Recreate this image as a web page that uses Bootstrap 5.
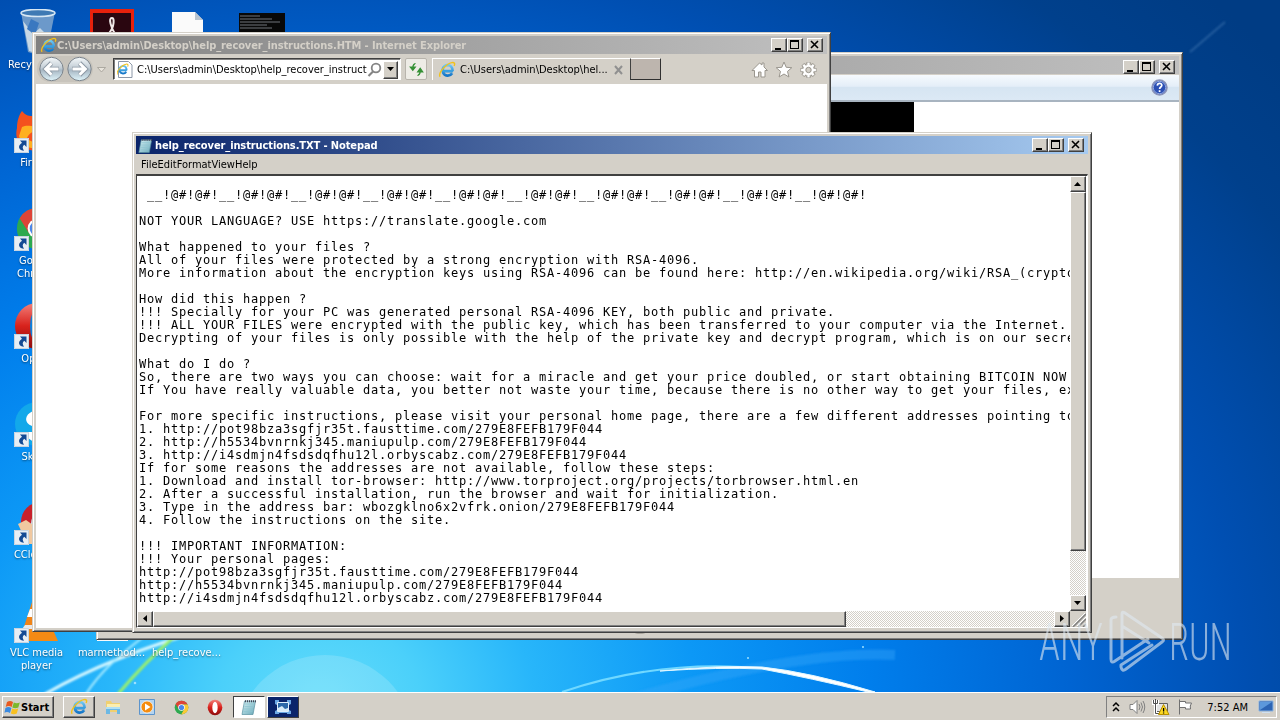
<!DOCTYPE html>
<html lang="en">
<head>
    <meta charset="UTF-8">
    <meta name="viewport" content="width=device-width, initial-scale=1.0">
    <title>Desktop</title>
    <link href="https://cdn.jsdelivr.net/npm/bootstrap@5.3.0/dist/css/bootstrap.min.css" rel="stylesheet">
    <style>
        :root { --face: #d4d0c8; --dark: #404040; --shade: #808080; }
        body { width: 1280px; height: 720px; overflow: hidden; font: 11px/13px "DejaVu Sans Condensed", "DejaVu Sans", sans-serif; font-stretch: condensed; color: #000; background: #0050b0; }
        svg { display: block; flex: none; }
        .desk { height: 692px; }
        .wallpaper { position: absolute; left: 0; top: 0; }

        /* desktop icons */
        .icon-grid { position: absolute; left: -1px; top: 5px; display: grid; grid-template-columns: repeat(4, 75px); grid-template-rows: repeat(7, 98px); }
        .icon-cell { padding-top: 4px; text-align: center; color: #fff; text-shadow: 0 1px 2px #0008; white-space: nowrap; }
        .icon-cell svg { margin: 0 auto 1px; }

        /* windows */
        .win { position: absolute; background: var(--face); border: 1px solid; border-color: var(--face) var(--dark) var(--dark) var(--face); box-shadow: inset 1px 1px #fff, inset -1px -1px var(--shade); padding: 3px; display: flex; flex-direction: column; }
        .win-photo { left: 96px; top: 52px; width: 1087px; height: 588px; }
        .win-ie { left: 32px; top: 32px; width: 799px; height: 600px; }
        .win-note { left: 132px; top: 132px; width: 960px; height: 501px; }
        .caption { height: 18px; flex: none; font-weight: bold; color: #d4d0c8; background: linear-gradient(90deg, #808080, #c0c0c0); white-space: nowrap; }
        .win-note .caption { color: #fff; background: linear-gradient(90deg, #0a246a, #a6caf0); }
        .cap-btn { width: 16px; height: 14px; flex: none; }
        .raised { background: var(--face); border: 1px solid; border-color: #fff var(--dark) var(--dark) #fff; box-shadow: inset -1px -1px var(--shade); flex: none; display: flex; align-items: center; justify-content: center; }
        .checker { background: repeating-conic-gradient(#fff 0 25%, #d4d0c8 0 50%) 0 0 / 2px 2px; }

        /* photo viewer */
        .cmd-bar { height: 27px; margin-top: 1px; background: linear-gradient(#f6fafe 0, #e4eef8 45%, #d6e5f2 50%, #dce9f5 100%); border-bottom: 2px solid #a8b4c0; padding-right: 11px; }
        .photo-view { height: 476px; background: #fff; }
        .photo-black { width: 814px; background: #000; }

        /* browser */
        .ie-bar { height: 30px; flex: none; }
        .addr { width: 288px; height: 22px; margin-left: 5px; background: #fff; border: 1px solid; border-color: #404040 #fff #fff #404040; box-shadow: inset 1px 1px #808080; padding: 1px 2px 0 3px; }
        .refresh { width: 22px; height: 22px; margin-left: 4px; background: #eeece6; border: 1px solid #b8b4ac; border-radius: 2px; }
        .ie-tab { width: 198px; height: 22px; margin-left: 5px; border-left: 1px solid #fff; border-top: 1px solid #fff; padding: 0 4px 0 5px; }
        .new-tab { width: 31px; height: 22px; background: #bdb5ae; border: 1px solid; border-color: #fff #303030 #303030 #404040; }

        /* notepad */
        .menu-row { height: 20px; padding-left: 5px; }
        .edit-box { border-left: 1px solid var(--dark); border-top: 2px solid var(--dark); border-right: 1px solid #fff; border-bottom: 1px solid #fff; background: #fff; display: grid; grid-template-columns: 933px 16px; grid-template-rows: 435px 16px; }
        .note-text { margin: 0; padding: 0 0 0 2px; overflow: hidden; font: 12px/13px "DejaVu Sans Mono", monospace; letter-spacing: .776px; color: #000; white-space: pre; }
        .sb-btn { width: 16px; height: 16px; }

        /* taskbar */
        .task-bar { height: 28px; background: var(--face); box-shadow: inset 0 1px #fff; padding: 4px 3px 2px 2px; position: relative; }
        .start-btn { width: 52px; height: 22px; font-weight: bold; justify-content: start; padding-left: 1px; }
        .task-item { width: 32px; height: 22px; flex: none; display: flex; align-items: center; justify-content: center; }
        .task-item.on { background: #fff; border: 1px solid; border-color: #404040 #fff #fff #404040; }
        .task-item.hot { background: #0a246a; border: 1px solid; border-color: #fff #404040 #404040 #fff; }
        .tray { width: 171px; height: 22px; border: 1px solid; border-color: #808080 #fff #fff #808080; padding: 0 1px 0 5px; }
        .watermark { position: absolute; left: 1030px; top: 600px; }
        .f-title { letter-spacing: -.1px; }
    </style>
</head>
<body>

<!-- Shared symbols -->
<svg width="0" height="0" class="position-absolute">
    <defs>
        <linearGradient id="ieBlue" x1="0" y1="0" x2="0" y2="1"><stop offset="0" stop-color="#6cc8f6"/><stop offset="1" stop-color="#1677c8"/></linearGradient>
        <linearGradient id="redFade" x1="0" y1="0" x2="0" y2="1"><stop offset="0" stop-color="#f2807a"/><stop offset=".5" stop-color="#d8221c"/><stop offset="1" stop-color="#8c0c0c"/></linearGradient>
        <linearGradient id="navBall" x1="0" y1="0" x2="0" y2="1"><stop offset="0" stop-color="#f4f8fa"/><stop offset=".45" stop-color="#c4ced6"/><stop offset=".55" stop-color="#a8b8c4"/><stop offset="1" stop-color="#dff4fa"/></linearGradient>
        <linearGradient id="padFade" x1="0" y1="0" x2="1" y2="1"><stop offset="0" stop-color="#d8f2f6"/><stop offset="1" stop-color="#68a8b8"/></linearGradient>
        <symbol id="ie" viewBox="0 0 18 18">
            <path d="M4.6 10.2h10.2M14.7 10.2C14.6 6.3 12.4 4 9.6 4a5.3 5.3 0 1 0 4.6 8.3" fill="none" stroke="url(#ieBlue)" stroke-width="2.7"/>
            <path d="M4.6 10h10" stroke="#3aa0e0" stroke-width="2"/>
            <path d="M2.2 15.8C.2 13.2 4 7.400 9.500 3.500c3-2 6.200-2.600 7-1.200.3.7.1 1.700-.4 2.700" fill="none" stroke="#f2c21a" stroke-width="1.400"/>
        </symbol>
        <symbol id="pad" viewBox="0 0 18 18">
            <path d="M4.500 3h11L13 16.500H2z" fill="url(#padFade)" stroke="#5890a0" stroke-width=".7"/>
            <path d="M5 6h9M4.500 8.500h9M4 11h9M3.600 13.500h8.500" stroke="#8cc4d0" stroke-width=".7"/>
            <path d="M5 3.200h11" stroke="#445" stroke-width="2" stroke-dasharray="1 1"/>
        </symbol>
        <symbol id="chrome" viewBox="0 0 48 48">
            <circle cx="24" cy="24" r="22" fill="#2da94f"/>
            <path d="M5 13A22 22 0 0 1 43.500 14H24L15 29z" fill="#de4437"/>
            <path d="M43.500 14A22 22 0 0 1 23 46l10-17-4-15z" fill="#fcc934"/>
            <circle cx="24" cy="24" r="10.500" fill="#fff"/><circle cx="24" cy="24" r="8.300" fill="#4a86e8"/>
        </symbol>
        <symbol id="opera" viewBox="0 0 48 48">
            <ellipse cx="24" cy="24" rx="22" ry="23" fill="url(#redFade)"/>
            <ellipse cx="24" cy="24" rx="8" ry="17" fill="#fff"/>
        </symbol>
        <symbol id="arrow" viewBox="0 0 15 15">
            <path d="M0 0h15v15H0z" fill="#e8eef4"/><path d="M.5.5h14v14H.5z" fill="none" stroke="#c8d4e0"/>
            <path d="M6 2.500h6.500V9l-2.200-2.200C8 8.500 8.500 10.500 10 12.800 5.500 12.500 2.500 8.500 8 4.700z" fill="#144a94"/>
        </symbol>
        <symbol id="cMin" viewBox="0 0 14 12"><path d="M3 9h6v2H3z"/></symbol>
        <symbol id="cMax" viewBox="0 0 14 12"><path d="M2 1h9v9H2zM3 3v6h7V3z" fill-rule="evenodd"/></symbol>
        <symbol id="cX" viewBox="0 0 14 12"><path d="M3 2l7 7M10 2L3 9" stroke="#000" stroke-width="1.600"/></symbol>
    </defs>
</svg>

<div class="desk">
    <!-- Wallpaper -->
    <svg class="wallpaper" width="1280" height="692">
        <defs>
            <radialGradient id="sky" gradientUnits="userSpaceOnUse" cx="0" cy="0" r="1250" gradientTransform="translate(320 700) scale(1 .8)">
                <stop offset="0" stop-color="#62dcfb"/><stop offset=".08" stop-color="#4bd0fa"/><stop offset=".17" stop-color="#28b6fa"/><stop offset=".3" stop-color="#0c98f6"/><stop offset=".44" stop-color="#007eec"/><stop offset=".6" stop-color="#0064d2"/><stop offset=".74" stop-color="#004fb2"/><stop offset=".9" stop-color="#00408c"/><stop offset="1" stop-color="#003c84"/>
            </radialGradient>
            <filter id="soft"><feGaussianBlur stdDeviation="1.200"/></filter>
        </defs>
        <rect width="1280" height="692" fill="url(#sky)"/>
        <circle cx="325" cy="745" r="90" fill="#fff" opacity=".16"/>
        <g fill="none" filter="url(#soft)">
            <path d="M45 694C90 668 140 648 210 628" stroke="#d8f8ff" stroke-width="3"/>
            <path d="M86 694C100 672 120 654 150 632" stroke="#a8ecff" stroke-width="2"/>
            <path d="M118 694C135 674 152 656 175 636" stroke="#9cf06c" stroke-width="3"/>
            <path d="M600 708Q790 650 895 655" stroke="#38a8fa" stroke-width="10" opacity=".4"/>
            <path d="M1190 52L1225 22" stroke="#4a80b8" stroke-width="2" opacity=".5"/>
        </g>
        <path d="M562 692Q650 662 742 667" fill="none" stroke="#70d8ff" stroke-width="2"/>
        <path d="M660 671Q720 665 762 667 810 672 875 692L868 692Q810 678 762 669 720 667 660 671z" fill="#fff" stroke="#e0f6ff"/>
        <g fill="#9ce0ff"><circle cx="748" cy="658" r="1"/><circle cx="863" cy="647" r="1"/><circle cx="135" cy="683" r="1.300"/></g>
    </svg>

    <!-- Desktop icons -->
    <div class="icon-grid">
        <div class="icon-cell">
            <svg width="48" height="48">
                <path d="M8 3l7 40q9 4 19 0l8-40z" fill="#7fa6cc" opacity=".85"/><path d="M10 12l6 30q8 3 17 0l3-14-9-9-7 6z" fill="#dfe8ee" opacity=".8"/>
                <path d="M18 10l8 4-4 12-8-6z" fill="#3a78c0"/><ellipse cx="25" cy="4" rx="17" ry="3.500" fill="#3f7ab4" stroke="#d8e8f4" stroke-width="1.500"/>
            </svg>
            Recycle Bin
        </div>
        <div class="icon-cell">
            <svg width="48" height="48"><path d="M2 0h44v46H2z" fill="#e8210c"/><path d="M5 4h38v38H5z" fill="#2a0610"/><path d="M24 9c-3 0-2 5 0 10s6 9 9 10-14 1-18 6c-2-4 8-10 10-18 1-4 1-8-1-8z" fill="none" stroke="#f0e8e8" stroke-width="2"/></svg>
            Acrobat
        </div>
        <div class="icon-cell">
            <svg width="48" height="48"><path d="M9 3h23l8 8v36H9z" fill="#fafafa"/><path d="M32 3v8h8z" fill="#b8c4d0"/></svg>
        </div>
        <div class="icon-cell">
            <svg width="48" height="48"><path d="M1 4h46v40H1z" fill="#080808"/><path d="M2 7h20M2 10h32M2 13h40M2 16h27M2 19h32" stroke="#70747a"/></svg>
        </div>

        <div class="icon-cell" style="grid-column: 1">
            <svg width="48" height="48">
                <path d="M9 4c3 4 6 5 10 5C28 2 45 6 46 25S32 46 22 44C8 42 1 33 4 21 4 14 6 8 9 4z" fill="#f4511e"/><path d="M9 20c5-3 11 0 15-1-3 6-8 7-10 12 4 5 12 6 18 2-4 12-22 11-26-4z" fill="#ffb020"/><circle cx="28" cy="24" r="9" fill="#30357c"/>
                <use href="#arrow" x="1" y="31" width="15" height="15"/>
            </svg>
            Firefox
        </div>
        <div class="icon-cell" style="grid-column: 1">
            <svg width="48" height="48"><use href="#chrome" x="2" y="1" width="45" height="45"/><use href="#arrow" x="1" y="31" width="15" height="15"/></svg>
            Google<br>Chrome
        </div>
        <div class="icon-cell" style="grid-column: 1">
            <svg width="48" height="48"><ellipse cx="24" cy="23" rx="22" ry="23" fill="url(#redFade)"/><ellipse cx="25" cy="23" rx="8" ry="18" fill="#0a80e0"/><use href="#arrow" x="1" y="31" width="15" height="15"/></svg>
            Opera
        </div>
        <div class="icon-cell" style="grid-column: 1">
            <svg width="48" height="48"><circle cx="24" cy="23" r="22" fill="#12a8ea"/><path d="M34 10H20c-9 4-9 12-1 15l14 4-2 6c-6 2-11 0-12-4h-6c1 10 12 12 20 9z" fill="#fff"/><use href="#arrow" x="1" y="31" width="15" height="15"/></svg>
            Skype
        </div>
        <div class="icon-cell" style="grid-column: 1">
            <svg width="48" height="48"><circle cx="28" cy="23" r="20" fill="#c8202a"/><circle cx="32" cy="25" r="14" fill="#c8dcec"/><path d="M5 25l8-4 14 10 4 14H14z" fill="#f0c8a0"/><use href="#arrow" x="1" y="31" width="15" height="15"/></svg>
            CCleaner
        </div>
        <div class="icon-cell" style="grid-column: 1">
            <svg width="48" height="48"><path d="M20 2h8l12 34H9z" fill="#f08418"/><path d="M17 12h14l3 8H14z" fill="#fff"/><path d="M12 28h25l1 4H9z" fill="#e8e8e8"/><path d="M10 33h30l5 11H3z" fill="#f48a14"/><use href="#arrow" x="1" y="31" width="15" height="15"/></svg>
            VLC media<br>player
        </div>
        <div class="icon-cell">
            <svg width="48" height="48"><path d="M9 2h31v42H9z" fill="#fafafa"/></svg>
            marmethod...
        </div>
        <div class="icon-cell">
            <svg width="48" height="48"><path d="M9 2h31v41H9z" fill="#fafafa"/></svg>
            help_recove...
        </div>
    </div>

    <!-- Photo viewer -->
    <div class="win win-photo">
        <div class="caption d-flex align-items-center justify-content-end pe-1 pt-1">
            <div class="raised cap-btn"><svg width="14" height="12"><use href="#cMin"/></svg></div>
            <div class="raised cap-btn"><svg width="14" height="12"><use href="#cMax"/></svg></div>
            <div class="raised cap-btn ms-1"><svg width="14" height="12"><use href="#cX"/></svg></div>
        </div>
        <div class="cmd-bar d-flex align-items-center justify-content-end">
            <svg width="17" height="17" viewBox="0 0 17 17"><circle cx="8.500" cy="8.500" r="7.500" fill="#2c50b4" stroke="#8c94b8" stroke-width="1.500"/><circle cx="8.500" cy="8.500" r="6.200" fill="none" stroke="#a8bce8" stroke-width=".8"/><path d="M6.300 6.600c.2-3 4.600-2.800 4.500-.2-.1 1.600-2.200 1.700-2.200 3.600M8.600 11.300v1.700" fill="none" stroke="#fff" stroke-width="1.700"/></svg>
        </div>
        <div class="photo-view d-flex"><div class="photo-black"></div></div>
        <div class="flex-grow-1 d-flex align-items-end justify-content-center"><svg width="14" height="4"><ellipse cx="7" cy="0" rx="6" ry="2" fill="#a8a49c"/></svg></div>
    </div>

    <!-- Internet Explorer -->
    <div class="win win-ie">
        <div class="caption d-flex align-items-center ps-1 pe-1">
            <svg width="17" height="17"><use href="#ie"/></svg>
            <span class="f-title flex-grow-1">C:\Users\admin\Desktop\help_recover_instructions.HTM - Internet Explorer</span>
            <div class="raised cap-btn"><svg width="14" height="12"><use href="#cMin"/></svg></div>
            <div class="raised cap-btn"><svg width="14" height="12"><use href="#cMax"/></svg></div>
            <div class="raised cap-btn ms-1"><svg width="14" height="12"><use href="#cX"/></svg></div>
        </div>
        <div class="ie-bar d-flex align-items-center">
            <svg width="72" height="28" viewBox="0 0 72 28">
                <rect x="1" y="1" width="56" height="26" rx="13" fill="#c8c4bc"/>
                <g fill="url(#navBall)" stroke="#7c848c"><circle cx="15.500" cy="14" r="11.700"/><circle cx="43.500" cy="14" r="11.700"/></g>
                <g fill="none" stroke="#8c98a4" stroke-width="4.600"><path d="M23 14H10M15.500 8L9.500 14l6 6M36 14h13M43.500 8l6 6-6 6"/></g>
                <g fill="none" stroke="#fff" stroke-width="3"><path d="M22.500 14H10M15.500 8.200L9.700 14l5.800 5.800M36.500 14h12.500M43.500 8.200l5.800 5.800-5.800 5.800"/></g>
                <path d="M61.500 12.500h8L65.500 17z" fill="#e8e4dc" stroke="#a09c94" stroke-width=".8"/>
            </svg>
            <div class="addr d-flex align-items-center">
                <svg width="16" height="17" viewBox="0 0 16 17"><path d="M1.500.5h10l3.500 3.500v12.500H1.500z" fill="#fff" stroke="#8c98a8"/><use href="#ie" x="-1" y="2" width="13" height="13"/></svg>
                <span class="f-addr flex-grow-1 ms-1 text-nowrap">C:\Users\admin\Desktop\help_recover_instruct</span>
                <svg width="16" height="16" viewBox="0 0 16 16"><circle cx="9" cy="6" r="4.300" fill="none" stroke="#848484" stroke-width="1.800"/><path d="M6 9.500L1.500 14" stroke="#848484" stroke-width="2.200"/></svg>
                <div class="raised" style="width: 15px; height: 18px"><svg width="8" height="5"><path d="M0 0h7L3.500 4z"/></svg></div>
            </div>
            <div class="refresh d-flex align-items-center justify-content-center">
                <svg width="15" height="15" viewBox="0 0 15 15"><path d="M6.500 1.500Q3.800 2 3.800 5.500M1.200 5h5.200L3.800 8.400zM8.500 13.500q2.700-.5 2.700-4M8.600 10h5.200l-2.600-3.700z" fill="#349034" stroke="#349034" stroke-width="1.100"/></svg>
            </div>
            <div class="ie-tab d-flex align-items-center">
                <svg width="18" height="18"><use href="#ie"/></svg>
                <span class="f-tab flex-grow-1 ms-1 text-nowrap">C:\Users\admin\Desktop\hel...</span>
                <svg width="14" height="10"><path d="M3 1l7 8M10 1L3 9" stroke="#909090" stroke-width="2"/></svg>
            </div>
            <div class="new-tab"></div>
            <svg class="ms-auto me-1" width="72" height="22" viewBox="0 0 72 22" fill="#fff" stroke="#9a968e">
                <path d="M1 12.500l7.500-7.500 2.500 2V5h2v4l3.500 3.500h-2.500V19h-4v-5H7.500v5h-4v-6.500z"/>
                <path d="M33 4l2.200 5.300 5.600.4-4.300 3.700 1.400 5.600-4.900-3-4.900 3 1.400-5.600-4.300-3.700 5.600-.4z"/>
                <g><circle cx="57.500" cy="12" r="6.500" stroke-width="1"/><path d="M57.500 4v16M49.500 12h16M51.800 6.300l11.400 11.400M63.200 6.300L51.800 17.700" stroke-width="4"/><path d="M57.500 4.600v14.800M50.100 12h14.800M52.300 6.800l10.400 10.400M62.700 6.800L52.300 17.200" stroke="#fff" stroke-width="2.400"/><circle cx="57.500" cy="12" r="5.300" stroke="none"/><circle cx="57.500" cy="12" r="2.700" fill="#d4d0c8"/></g>
            </svg>
        </div>
        <div class="bg-white flex-grow-1"></div>
    </div>

    <!-- Notepad -->
    <div class="win win-note">
        <div class="caption d-flex align-items-center pe-1">
            <svg width="19" height="17"><use href="#pad"/></svg>
            <span class="f-title flex-grow-1">help_recover_instructions.TXT - Notepad</span>
            <div class="raised cap-btn"><svg width="14" height="12"><use href="#cMin"/></svg></div>
            <div class="raised cap-btn"><svg width="14" height="12"><use href="#cMax"/></svg></div>
            <div class="raised cap-btn ms-1"><svg width="14" height="12"><use href="#cX"/></svg></div>
        </div>
        <div class="menu-row d-flex align-items-center">
            <span class="menu-word">File</span><span class="menu-word">Edit</span><span class="menu-word">Format</span><span class="menu-word">View</span><span class="menu-word">Help</span>
        </div>
        <div class="edit-box">
            <div class="note-text">
 __!@#!@#!__!@#!@#!__!@#!@#!__!@#!@#!__!@#!@#!__!@#!@#!__!@#!@#!__!@#!@#!__!@#!@#!__!@#!@#!

NOT YOUR LANGUAGE? USE https://translate.google.com

What happened to your files ?
All of your files were protected by a strong encryption with RSA-4096.
More information about the encryption keys using RSA-4096 can be found here: http://en.wikipedia.org/wiki/RSA_(cryptosystem)

How did this happen ?
!!! Specially for your PC was generated personal RSA-4096 KEY, both public and private.
!!! ALL YOUR FILES were encrypted with the public key, which has been transferred to your computer via the Internet.
Decrypting of your files is only possible with the help of the private key and decrypt program, which is on our secret

What do I do ?
So, there are two ways you can choose: wait for a miracle and get your price doubled, or start obtaining BITCOIN NOW
If You have really valuable data, you better not waste your time, because there is no other way to get your files, except

For more specific instructions, please visit your personal home page, there are a few different addresses pointing to
1. http://pot98bza3sgfjr35t.fausttime.com/279E8FEFB179F044
2. http://h5534bvnrnkj345.maniupulp.com/279E8FEFB179F044
3. http://i4sdmjn4fsdsdqfhu12l.orbyscabz.com/279E8FEFB179F044
If for some reasons the addresses are not available, follow these steps:
1. Download and install tor-browser: http://www.torproject.org/projects/torbrowser.html.en
2. After a successful installation, run the browser and wait for initialization.
3. Type in the address bar: wbozgklno6x2vfrk.onion/279E8FEFB179F044
4. Follow the instructions on the site.

!!! IMPORTANT INFORMATION:
!!! Your personal pages:
http://pot98bza3sgfjr35t.fausttime.com/279E8FEFB179F044
http://h5534bvnrnkj345.maniupulp.com/279E8FEFB179F044
http://i4sdmjn4fsdsdqfhu12l.orbyscabz.com/279E8FEFB179F044</div>
            <div class="checker d-flex flex-column">
                <div class="raised sb-btn"><svg width="8" height="5"><path d="M0 4h7L3.500 0z"/></svg></div>
                <div class="raised" style="height: 359px"></div>
                <div class="raised sb-btn mt-auto"><svg width="8" height="5"><path d="M0 0h7L3.500 4z"/></svg></div>
            </div>
            <div class="checker d-flex">
                <div class="raised sb-btn"><svg width="5" height="8"><path d="M4 0v7L0 3.500z"/></svg></div>
                <div class="raised" style="width: 693px"></div>
                <div class="raised sb-btn ms-auto"><svg width="5" height="8"><path d="M0 0v7L4 3.500z"/></svg></div>
            </div>
            <div style="background: var(--face)"><svg width="16" height="16"><path d="M3 16L16 3M8 16l8-8M13 16l3-3" stroke="#808080" stroke-width="1.500"/><path d="M2 15L15 2M7 15l9-9" stroke="#fff"/></svg></div>
        </div>
    </div>
</div>

<!-- Taskbar -->
<div class="task-bar d-flex">
    <div class="raised start-btn">
        <svg width="17" height="17" viewBox="0 0 17 17"><path d="M3 3q3-2 6 0L7.700 8q-3-2-6 0z" fill="#e85a20"/><path d="M9.800 3.400q3 1.600 6 0L14.300 8.400q-3 1.600-6 0z" fill="#7cb82c"/><path d="M1.400 9q3-2 6 0L6 14q-3-2-5.500-.2z" fill="#3a8ae0"/><path d="M8.200 9.400q3 1.600 6 0l-1.400 5q-3 1.600-6 0z" fill="#f8c020"/></svg>
        <span class="f-start">Start</span>
    </div>
    <div class="d-flex" style="gap: 2px; margin-left: 9px">
        <div class="task-item raised"><svg width="18" height="18"><use href="#ie"/></svg></div>
        <div class="task-item"><svg width="18" height="18" viewBox="0 0 18 18"><path d="M2 3h5l1 2h8v9H2z" fill="#f0d070"/><path d="M3 6h13v4H3z" fill="#fbeeb0"/><path d="M2 9h14v7h-3v-4H6v4H2z" fill="#6cb8e4"/><path d="M2 9h14v2H2z" fill="#b0e0f4"/></svg></div>
        <div class="task-item"><svg width="18" height="18" viewBox="0 0 18 18"><path d="M1.500 1.500h15v15h-15z" fill="#b4d4f0" stroke="#5c94cc"/><circle cx="9" cy="9" r="6" fill="#f48c10" stroke="#fff" stroke-width=".7"/><path d="M7 5.500v7l5.500-3.500z" fill="#fff"/></svg></div>
        <div class="task-item"><svg width="15" height="15"><use href="#chrome"/></svg></div>
        <div class="task-item"><svg width="16" height="17"><use href="#opera"/></svg></div>
        <div class="task-item on"><svg width="18" height="18"><use href="#pad"/></svg></div>
        <div class="task-item hot"><svg width="18" height="16" viewBox="0 0 18 16"><path d="M1 1h4v2h8V1h4v4l-2 1v5l2 1v3h-4v-1H5v1H1v-3l2-1V6L1 5z" fill="#6ca8e4"/><path d="M3.500 3.500h11v9h-11z" fill="#2c68a8" stroke="#e0f0fc"/><path d="M4 12V9l4-2 3 3 3-1v3z" fill="#d8ecf8"/></svg></div>
    </div>
    <div class="tray d-flex align-items-center ms-auto">
        <svg width="8" height="12" viewBox="0 0 8 12"><path d="M1 5l3-3 3 3M1 10l3-3 3 3" fill="none" stroke="#000" stroke-width="1.500"/></svg>
        <svg class="ms-2" width="18" height="18" viewBox="0 0 18 18" fill="none" stroke="#808080"><path d="M2 6.500h3L9 2.500v13l-4-4H2z" fill="#fff"/><path d="M11 6q2 3 0 6M13 4.500q3 4.500 0 9M15 3q3.500 6 0 12"/></svg>
        <svg style="margin-left: 6px" width="18" height="18" viewBox="0 0 18 18"><path d="M4.500 5.500h11v8h-11z" fill="#e4e4e4" stroke="#606060"/><path d="M1.500 2v3.500h4V2M3.500 6v9.500h5" fill="none" stroke="#fff" stroke-width="3"/><path d="M1.500 2v3.500h4V2M3.500 1v14.500h5" fill="none" stroke="#505050"/><path d="M11.500 6.500L17 16.500H6.500z" fill="#fcd820" stroke="#b89000"/><path d="M11.600 10v3.500M11.600 14.500v1" stroke="#000" stroke-width="1.300"/></svg>
        <svg style="margin-left: 6px" width="18" height="18" viewBox="0 0 18 18"><path d="M3.500 1.500v15M3.500 3.500h6v1.500h6q-2 3-1 6h-5V9.500h-6" fill="#fff" stroke="#707070"/></svg>
        <span class="f-time ms-auto text-nowrap">7:52 AM</span>
        <svg style="margin-left: 10px" width="17" height="14" viewBox="0 0 17 14"><path d="M1 1h14v10H1z" fill="#2c64b4" stroke="#8cb4e0"/><path d="M2 10V2h12z" fill="#5c98dc"/><path d="M4 12.500h8" stroke="#d0e0f0"/></svg>
    </div>
</div>

<!-- Watermark -->
<svg class="watermark" width="210" height="78" fill="#dfe8f0" opacity=".62">
    <g font-family="Roboto, sans-serif" font-size="52" font-weight="300"><text x="9" y="59.500" textLength="64" lengthAdjust="spacingAndGlyphs">ANY</text><text x="139" y="59.500" textLength="63" lengthAdjust="spacingAndGlyphs">RUN</text></g>
    <g fill="none" stroke="#dfe8f0" stroke-width="3" stroke-linejoin="round" stroke-linecap="round"><path d="M92 58V14q0-3 3-1l37 25q3 2 0 4L96 69q-4 3-5-2v-2l31-20M86 17q-5 0-5 3v39q0 5 4 2l33-22M92 26l27 17"/></g>
</svg>

<script src="https://cdn.jsdelivr.net/npm/bootstrap@5.3.0/dist/js/bootstrap.bundle.min.js"></script>
</body>
</html>
